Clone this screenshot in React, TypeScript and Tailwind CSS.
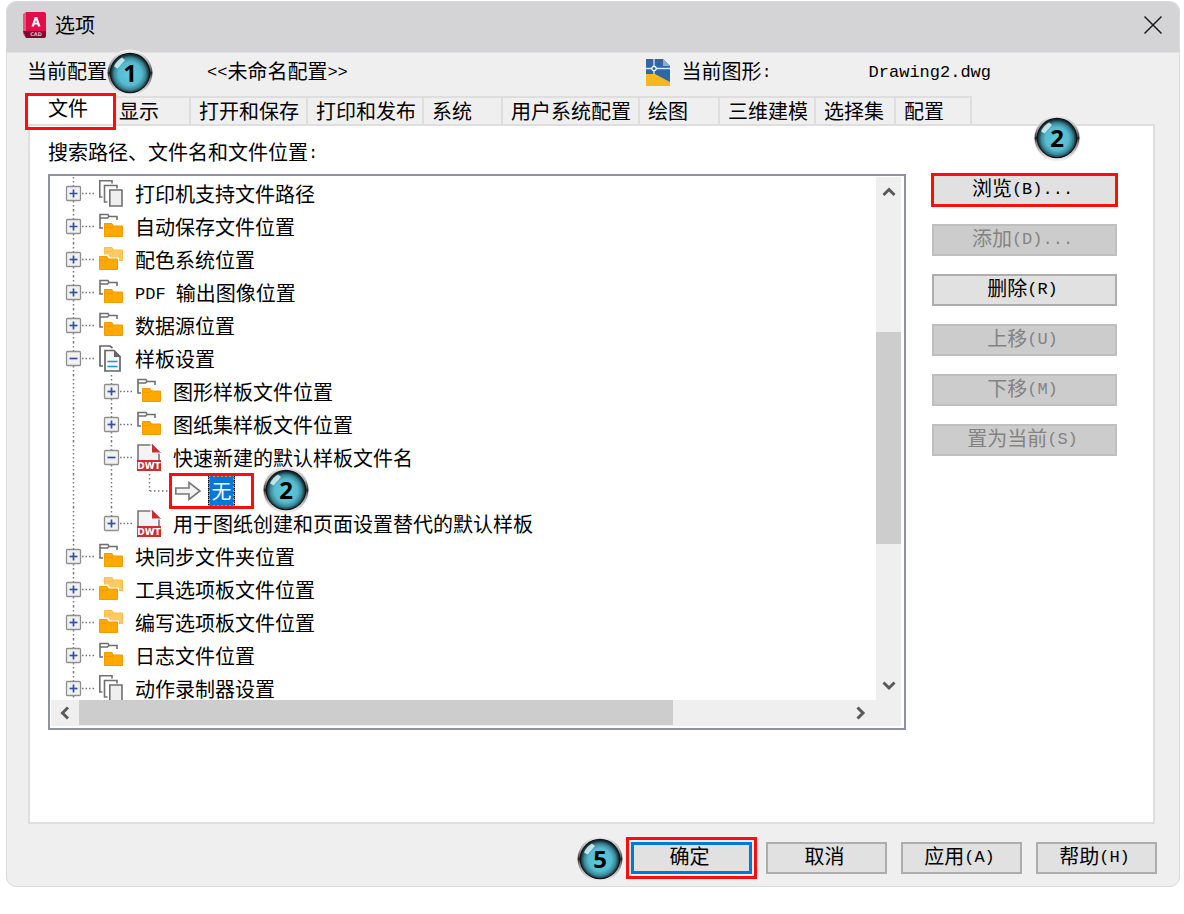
import React from "react";

const MONO = /([\x20-\x7e]+)/;

/* Han characters at 20px are paired with a monospaced Latin face of half that advance. */
function Txt({ children }: { children: string }) {
  return (
    <>
      {children.split(MONO).map((part, i) =>
        i % 2 ? (
          <span key={i} className="whitespace-pre align-[2px] font-['Liberation_Mono',monospace] text-[17px] leading-none">
            {part}
          </span>
        ) : (
          part
        )
      )}
    </>
  );
}

function Badge({ n, id, className }: { n: string; id: string; className: string }) {
  return (
    <span className={`absolute z-20 flex size-12 items-center justify-center ${className}`}>
      <svg viewBox="0 0 48 48" className="absolute inset-0 size-full" aria-hidden="true">
        <defs>
          <radialGradient id={`${id}-fill`} cx="0.5" cy="0.52" r="0.5">
            <stop offset="0" stopColor="#5fcbdf" />
            <stop offset="0.6" stopColor="#55bbd0" />
            <stop offset="0.82" stopColor="#3a8797" />
            <stop offset="1" stopColor="#12282e" />
          </radialGradient>
          <linearGradient id={`${id}-rim`} x1="0" y1="0" x2="0" y2="1">
            <stop offset="0" stopColor="#f1eff1" />
            <stop offset="0.3" stopColor="#a3a0a3" />
            <stop offset="0.46" stopColor="#4a4748" />
            <stop offset="0.5" stopColor="#1d1b1c" />
            <stop offset="0.6" stopColor="#82777b" />
            <stop offset="0.8" stopColor="#c3bfc2" />
            <stop offset="1" stopColor="#f2f1f3" />
          </linearGradient>
        </defs>
        <circle cx="24" cy="24" r="23.5" fill="#f1f0f1" />
        <circle cx="24" cy="24" r="22.5" fill={`url(#${id}-rim)`} />
        <circle cx="24" cy="24" r="20.3" fill="#0b1214" />
        <circle cx="24" cy="24" r="19.3" fill={`url(#${id}-fill)`} />
        <path d="M8 17.500 Q10.500 11.500 16 8.500 L19 11 L11.500 19.500 Z" fill="#d9f2f7" opacity="0.85" />
      </svg>
      <span className="relative font-['Noto_Sans',sans-serif] text-2xl font-bold leading-none text-black">{n}</span>
    </span>
  );
}

function Folder({ x, y, fill, edge }: { x: number; y: number; fill: string; edge: string }) {
  return (
    <g transform={`translate(${x} ${y})`}>
      <path d="M0.500 13.500V0.500H8L9.500 3H18.500V13.500Z" fill={fill} stroke={edge} />
      <path d="M1 4.500H8L9.500 3" fill="none" stroke={edge} />
    </g>
  );
}

type Kind = "pages" | "linked" | "folders" | "docs" | "dwt" | "arrow";

function Icon({ kind }: { kind: Kind }) {
  if (kind === "arrow")
    return (
      <svg viewBox="0 0 26 20" className="mr-[7px] h-5 w-[26px] shrink-0" aria-hidden="true">
        <path d="M0.800 7H14V1.500L25 10L14 18.500V13H0.800Z" fill="#f2f2f2" stroke="#777" strokeWidth="1.600" />
      </svg>
    );
  return (
    <svg viewBox="0 0 24 27" className="mr-3 h-[27px] w-6 shrink-0" aria-hidden="true">
      {kind === "pages" && (
        <g stroke="#707070" strokeWidth="1.600" fill="none">
          <path d="M3.500 17H0.800V0.800H13V3.500" />
          <path d="M8.500 22H5.500V5.500H18V8.500" />
          <path d="M10.800 10H23V26H10.800Z" fill="#efefef" />
        </g>
      )}
      {kind === "linked" && (
        <>
          <path d="M4 15H1V1.500H9L10 3.500H18V7M1 5H8.500L10 3.500" fill="none" stroke="#6e6e6e" strokeWidth="1.600" />
          <Folder x={5} y={10} fill="#ffa800" edge="#ee9c00" />
        </>
      )}
      {kind === "folders" && (
        <>
          <Folder x={5} y={1} fill="#ffca62" edge="#fbbd4b" />
          <path d="M-1 8.500H9.500L11 11.500H20V27H-1Z" fill="#fff" />
          <Folder x={0} y={10} fill="#ffa800" edge="#ee9c00" />
        </>
      )}
      {kind === "docs" && (
        <>
          <path d="M4 21H1V1H11L13.500 3" fill="none" stroke="#666" strokeWidth="1.700" />
          <path d="M6 5.500H15L21 11.500V26H6Z" fill="#f7f7f7" stroke="#666" strokeWidth="1.700" />
          <path d="M15 5V12H21.500Z" fill="#666" />
          <path d="M8.500 16.500H18.500M8.500 21.500H18.500" stroke="#1495e8" strokeWidth="1.600" />
        </>
      )}
      {kind === "dwt" && (
        <>
          <path d="M1 17V1H15L22 8V17" fill="#f3f3f3" stroke="#777" strokeWidth="1.600" />
          <path d="M15 0V9H24Z" fill="#cb2d30" />
          <path d="M14 0V9H23" fill="none" stroke="#fff" strokeWidth="1.200" />
          <path d="M0 16H24V27H0Z" fill="#cb2d30" />
          <text x="12" y="25" textAnchor="middle" fill="#fff" fontSize="9" fontWeight="bold" fontFamily="DejaVu Sans, sans-serif">
            DWT
          </text>
        </>
      )}
    </svg>
  );
}

function Guide({ kind }: { kind: "line" | "plus" | "minus" | "plusEnd" | "elbow" }) {
  const half = kind === "elbow" || kind === "plusEnd";
  return (
    <svg viewBox="0 0 38 33" className="h-[33px] w-[38px] shrink-0 overflow-visible" aria-hidden="true">
      <path d={half ? "M19.500 0V17" : "M19.500 0V33"} stroke="#777" strokeDasharray="1.500 2.500" strokeWidth="1.500" />
      {kind === "elbow" && <path d="M20 17H43" stroke="#777" strokeDasharray="1.500 2.500" strokeWidth="1.500" />}
      {kind !== "line" && kind !== "elbow" && (
        <>
          <path d="M28 16.500H41" stroke="#777" strokeDasharray="1.500 2" strokeWidth="1.500" />
          <rect x="12.500" y="9.500" width="14" height="14" rx="1" fill="#f1f1f1" stroke="#8f8f8f" strokeWidth="1.300" />
          <path d="M15.500 16.500H23.500" stroke="#3450a0" strokeWidth="1.700" />
          {kind !== "minus" && <path d="M19.500 12.500V20.500" stroke="#3450a0" strokeWidth="1.700" />}
        </>
      )}
    </svg>
  );
}

const rows: { d: number; k: Kind; t: string; g: "plus" | "minus" | "plusEnd" | "elbow" }[] = [
  { d: 0, k: "pages", t: "打印机支持文件路径", g: "plus" },
  { d: 0, k: "linked", t: "自动保存文件位置", g: "plus" },
  { d: 0, k: "folders", t: "配色系统位置", g: "plus" },
  { d: 0, k: "linked", t: "PDF 输出图像位置", g: "plus" },
  { d: 0, k: "linked", t: "数据源位置", g: "plus" },
  { d: 0, k: "docs", t: "样板设置", g: "minus" },
  { d: 1, k: "linked", t: "图形样板文件位置", g: "plus" },
  { d: 1, k: "linked", t: "图纸集样板文件位置", g: "plus" },
  { d: 1, k: "dwt", t: "快速新建的默认样板文件名", g: "minus" },
  { d: 2, k: "arrow", t: "无", g: "elbow" },
  { d: 1, k: "dwt", t: "用于图纸创建和页面设置替代的默认样板", g: "plusEnd" },
  { d: 0, k: "linked", t: "块同步文件夹位置", g: "plus" },
  { d: 0, k: "folders", t: "工具选项板文件位置", g: "plus" },
  { d: 0, k: "folders", t: "编写选项板文件位置", g: "plus" },
  { d: 0, k: "linked", t: "日志文件位置", g: "plus" },
  { d: 0, k: "pages", t: "动作录制器设置", g: "plus" },
];

const tabs = [
  { t: "显示", w: "w-[76px] pl-1" },
  { t: "打开和保存", w: "w-[117px] pl-2" },
  { t: "打印和发布", w: "w-[116px] pl-2" },
  { t: "系统", w: "w-[79px] pl-2" },
  { t: "用户系统配置", w: "w-[137px] pl-2" },
  { t: "绘图", w: "w-[80px] pl-2" },
  { t: "三维建模", w: "w-[96px] pl-2" },
  { t: "选择集", w: "w-[80px] pl-2" },
  { t: "配置", w: "w-[76px] pl-2" },
];

const actions = [
  { t: "浏览(B)...", on: true, mark: true },
  { t: "添加(D)...", on: false },
  { t: "删除(R)", on: true },
  { t: "上移(U)", on: false },
  { t: "下移(M)", on: false },
  { t: "置为当前(S)", on: false },
];

function Chevron({ d, className }: { d: string; className: string }) {
  return (
    <svg viewBox="0 0 14 14" className={`size-[14px] ${className}`} aria-hidden="true">
      <path d={d} fill="none" stroke="#5a5a5a" strokeWidth="3" />
    </svg>
  );
}

export default function App() {
  return (
    <div className="min-h-[914px] bg-white pt-px pr-1 pb-7 pl-[6px] font-['Noto_Sans_CJK_SC',sans-serif] text-xl leading-6 text-black">
      <main className="overflow-hidden rounded-[10px] border border-[#dadada] bg-[#efefef]">
        <header className="flex h-[50px] items-center bg-[#d4d4d6] pr-4 pb-1 pl-4">
          <svg viewBox="0 0 24 28" className="h-7 w-6" aria-hidden="true">
            <path d="M0 3L3 1V27L0 23Z" fill="#f0527d" />
            <path d="M3 1H21Q23 1 23 3V20H3Z" fill="#e40d4c" />
            <path d="M0 20H23V25Q23 27 21 27H3Z" fill="#7c0a2d" />
            <path d="M8.500 15.500L11.800 6H14.200L17.500 15.500H15L14.400 13.500H11.500L11 15.500ZM12.100 11.700H13.900L13 8.700Z" fill="#fff" />
            <text x="13" y="25" textAnchor="middle" fontSize="5" fontWeight="bold" fill="#e6b5c4" fontFamily="DejaVu Sans, sans-serif">
              CAD
            </text>
          </svg>
          <h1 className="ml-2 text-xl">选项</h1>
          <button type="button" aria-label="关闭" className="ml-auto">
            <svg viewBox="0 0 20 20" className="size-5" aria-hidden="true">
              <path d="M1.500 1.500L18.500 18.500M18.500 1.500L1.500 18.500" stroke="#1b1b1b" strokeWidth="1.500" />
            </svg>
          </button>
        </header>

        <div className="relative flex h-11 items-center border-t border-[#e2e2e2] pr-[188px] pb-2 pl-5">
          <span className="w-[180px]">当前配置</span>
          <span>
            <Txt>{"<<未命名配置>>"}</Txt>
          </span>
          <svg viewBox="0 0 24 27" className="mt-1 mr-3 ml-auto h-[27px] w-6" aria-hidden="true">
            <path d="M0 0H17L24 7V24H0Z" fill="#2f66a5" />
            <path d="M17 0L24 7H17Z" fill="#8fadd0" />
            <path d="M0 15H9L24 23V27H0Z" fill="#f8b722" />
            <path d="M0 9.500H24M8 0V15" stroke="#dce7f3" strokeWidth="1.300" />
            <circle cx="8" cy="9.500" r="2.200" fill="#2f66a5" stroke="#fff" strokeWidth="1.200" />
          </svg>
          <span className="w-[187px]">
            <Txt>当前图形:</Txt>
          </span>
          <span>
            <Txt>Drawing2.dwg</Txt>
          </span>
          <Badge n="1" id="b1" className="top-[-4px] left-[99px]" />
        </div>

        <div className="pr-6 pl-[21px]">
          <nav role="tablist" className="flex h-7">
            <button type="button" role="tab" aria-selected="true" className="relative z-10 w-[87px] bg-white pb-[6px] pl-5 text-left">
              文件
              <span className="absolute -top-[3px] -right-px -bottom-[6px] -left-[3px] border-[3px] border-[#ff0d0d]" />
            </button>
            {tabs.map(({ t, w }) => (
              <button key={t} type="button" role="tab" aria-selected="false" className={`border-t-2 border-r-2 border-[#dedede] text-left whitespace-nowrap ${w}`}>
                {t}
              </button>
            ))}
          </nav>
          <section className="relative h-[700px] border-2 border-[#dedede] bg-white pt-[14px] pr-9 pl-[18px]">
            <p className="mb-[10px]">
              <Txt>搜索路径、文件名和文件位置:</Txt>
            </p>
            <div className="flex gap-[26px]">
              <div className="flex h-[556px] min-w-0 flex-1 flex-col border-2 border-[#8f939d]">
                <div className="flex min-h-0 flex-1">
                  <ul role="tree" className="min-w-0 flex-1 overflow-hidden pt-px pl-1">
                    {rows.map(({ d, k, t, g }) => (
                      <li key={t} role="treeitem" className="flex h-[33px] items-center whitespace-nowrap">
                        {d > 0 && <Guide kind="line" />}
                        {d > 1 && <Guide kind="line" />}
                        <Guide kind={g} />
                        <span className="w-[7px] shrink-0" />
                        <Icon kind={k} />
                        {k === "arrow" ? (
                          <span className="relative flex h-8 w-[27px] items-center justify-center border-2 border-dotted border-[#f08a24] bg-[#0078d7] text-white outline-1 -outline-offset-1 outline-black outline-dotted">
                            {t}
                            <span className="absolute -top-[4px] -right-[21px] -bottom-[4px] -left-[41px] border-[3px] border-[#ff0d0d]" />
                            <Badge n="2" id="b2" className="top-[-11px] left-[52px]" />
                          </span>
                        ) : (
                          <span>
                            <Txt>{t}</Txt>
                          </span>
                        )}
                      </li>
                    ))}
                  </ul>
                  <div className="mt-px mr-[3px] flex w-[25px] flex-col items-center bg-[#efefef]">
                    <Chevron d="M1.500 10L7 4.500L12.500 10" className="mt-2" />
                    <div className="mt-[133px] h-[212px] w-full bg-[#cdcdcd]" />
                    <Chevron d="M1.500 4.500L7 10L12.500 4.500" className="mt-auto mb-2" />
                  </div>
                </div>
                <div className="mr-[3px] mb-[2px] ml-px flex h-[26px] items-center bg-[#efefef] pr-[34px]">
                  <Chevron d="M10 1.500L4.500 7L10 12.500" className="mr-[7px] ml-[7px]" />
                  <div className="h-[25px] w-[594px] self-start bg-[#cdcdcd]" />
                  <Chevron d="M4.500 1.500L10 7L4.500 12.500" className="ml-auto" />
                </div>
              </div>
              <div className="flex w-[185px] flex-col gap-[18px]">
                {actions.map(({ t, on, mark }) => (
                  <button
                    key={t}
                    type="button"
                    disabled={!on}
                    className={`relative flex h-8 items-center justify-center border-2 pr-1 pb-1 ${
                      on ? "border-[#adadad] bg-[#e1e1e1]" : "border-[#bfbfbf] bg-[#cccccc] text-[#838383]"
                    }`}
                  >
                    <span>
                      <Txt>{t}</Txt>
                    </span>
                    {mark && <span className="absolute -inset-[3px] border-[3px] border-[#ff0d0d]" />}
                  </button>
                ))}
              </div>
            </div>
            <Badge n="2" id="b3" className="top-[-12px] right-[72px]" />
          </section>
        </div>

        <footer className="flex h-[62px] items-start justify-end gap-[14px] pt-[18px] pr-[22px]">
          <button type="button" className="relative flex h-8 w-[121px] items-center justify-center border-[3px] border-[#0078d7] bg-[#e1e1e1] pr-1 pb-1">
            确定
            <span className="absolute -inset-[8px] border-[3px] border-[#ff0d0d]" />
            <Badge n="5" id="b5" className="top-[-10px] left-[-58px]" />
          </button>
          {["取消", "应用(A)", "帮助(H)"].map((t) => (
            <button key={t} type="button" className="flex h-8 w-[121px] items-center justify-center border-2 border-[#adadad] bg-[#e1e1e1] pr-1 pb-1">
              <span>
                <Txt>{t}</Txt>
              </span>
            </button>
          ))}
        </footer>
      </main>
    </div>
  );
}
